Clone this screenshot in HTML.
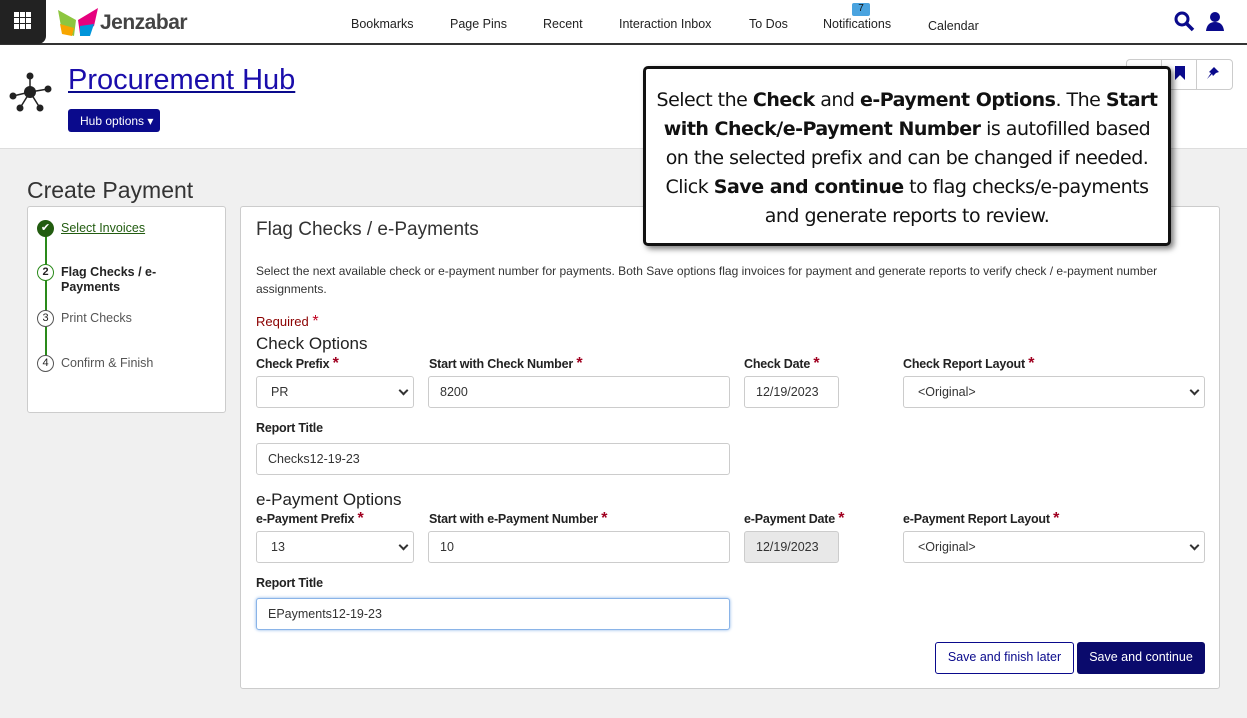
<!DOCTYPE html>
<html><head><meta charset="utf-8"><style>
*{box-sizing:border-box;margin:0;padding:0}
body{width:1247px;height:718px;overflow:hidden;background:#f0f0f0;font-family:"Liberation Sans",Arial,sans-serif;position:relative;color:#222}
.abs{position:absolute}
.top{left:0;top:0;width:1247px;height:45px;background:#fff;border-bottom:2px solid #333}
.grid{left:0;top:0;width:46px;height:44px;background:#222;border-bottom-right-radius:8px}
.nav{top:17px;font-size:12.5px;color:#222}
.hub{left:0;top:45px;width:1247px;height:104px;background:#fff;border-bottom:1px solid #ddd}
.lbl{font-size:12.5px;font-weight:bold;color:#222;letter-spacing:-0.2px}
.lbl b{color:#a00020;font-size:16px}
.inp{background:#fff;border:1px solid #ccc;border-radius:3px;height:32px;font-size:12.5px;padding:8px 11px;color:#333}
.sel:after{content:"";position:absolute;right:6px;top:10px;width:5px;height:5px;border-right:2px solid #333;border-bottom:2px solid #333;transform:rotate(45deg)}
.h3{font-size:17px;color:#222}
.step{font-size:12.5px;color:#555}
.circ{width:17px;height:17px;border:1.5px solid #555;border-radius:50%;font-size:11px;text-align:center;line-height:14px;background:#fff}
</style></head><body>
<div class="abs top"></div>
<div class="abs grid"><svg width="46" height="44"><g fill="#fff"><rect x="14" y="12" width="5" height="5"/><rect x="20" y="12" width="5" height="5"/><rect x="26" y="12" width="5" height="5"/><rect x="14" y="18" width="5" height="5"/><rect x="20" y="18" width="5" height="5"/><rect x="26" y="18" width="5" height="5"/><rect x="14" y="24" width="5" height="5"/><rect x="20" y="24" width="5" height="5"/><rect x="26" y="24" width="5" height="5"/></g></svg></div>
<svg class="abs" style="left:56px;top:6px" width="44" height="32"><path d="M2 4 L20 14 L18 30 L6 26Z" fill="#8dc63f"/><path d="M22 14 L42 2 L38 20 L24 28Z" fill="#e6007e"/><path d="M4 18 L18 22 L16 30 L6 28Z" fill="#f7a600"/><path d="M24 20 L38 18 L34 30 L24 30Z" fill="#0095da"/></svg>
<div class="abs" style="left:100px;top:11px;font-size:21px;color:#444;font-weight:bold;letter-spacing:-0.5px">Jenzabar</div>
<div class="abs nav" style="left:351px">Bookmarks</div>
<div class="abs nav" style="left:450px">Page Pins</div>
<div class="abs nav" style="left:543px">Recent</div>
<div class="abs nav" style="left:619px">Interaction Inbox</div>
<div class="abs nav" style="left:749px">To Dos</div>
<div class="abs nav" style="left:823px">Notifications</div>
<div class="abs" style="left:852px;top:3px;width:18px;height:13px;background:#4aa3df;border-radius:2px;font-size:10px;text-align:center;color:#111">7</div>
<div class="abs nav" style="left:928px;top:19px">Calendar</div>
<svg class="abs" style="left:1174px;top:11px" width="22" height="22"><circle cx="8" cy="8" r="6" fill="none" stroke="#0a0a8c" stroke-width="3"/><path d="M12 12 L19 19" stroke="#0a0a8c" stroke-width="3.5"/></svg>
<svg class="abs" style="left:1205px;top:11px" width="22" height="22"><circle cx="10" cy="6" r="5" fill="#0a0a8c"/><path d="M1 20 Q2 11 10 11 Q18 11 19 20Z" fill="#0a0a8c"/></svg>
<div class="abs hub"></div>
<svg class="abs" style="left:8px;top:72px" width="44" height="44"><g stroke="#222" stroke-width="1.5"><line x1="22" y1="20" x2="22" y2="4"/><line x1="22" y1="20" x2="5" y2="24"/><line x1="22" y1="20" x2="40" y2="17"/><line x1="22" y1="20" x2="12" y2="36"/><line x1="22" y1="20" x2="32" y2="36"/></g><g fill="#222"><circle cx="22" cy="20" r="6"/><circle cx="22" cy="4" r="3.5"/><circle cx="5" cy="24" r="3.5"/><circle cx="40" cy="17" r="3.5"/><circle cx="12" cy="36" r="3.5"/><circle cx="32" cy="36" r="3.5"/></g></svg>
<div class="abs" style="left:68px;top:64px;font-size:29px;color:#1a0dab;text-decoration:underline;text-decoration-color:#0a0a8c">Procurement Hub</div>
<div class="abs" style="left:68px;top:109px;width:92px;height:23px;background:#0a0a8c;border-radius:3px;color:#fff;font-size:12px;padding:5px 0 0 12px">Hub options ▾</div>
<div class="abs" style="left:1126px;top:59px;width:107px;height:31px;border:1px solid #ccc;border-radius:4px;background:#fff"></div>
<div class="abs" style="left:1161px;top:59px;width:36px;height:31px;border-left:1px solid #ccc;border-right:1px solid #ccc"></div>
<svg class="abs" style="left:1174px;top:66px" width="12" height="14"><path d="M1 0H11V14L6 9L1 14Z" fill="#0a0a8c"/></svg>
<svg class="abs" style="left:1206px;top:66px" width="14" height="14"><path d="M8 1L13 6L10 7L7 10L6 8L1 13L5 7L3 6Z" fill="#0a0a8c"/></svg>
<div class="abs" style="left:27px;top:177px;font-size:23px;color:#333">Create Payment</div>
<div class="abs" style="left:27px;top:206px;width:199px;height:207px;background:#fff;border:1px solid #ccc;border-radius:3px"></div>
<div class="abs" style="left:45px;top:236px;width:2px;height:120px;background:#2a8a1a"></div>
<div class="abs" style="left:37px;top:220px;width:17px;height:17px;border-radius:50%;background:#225c10;color:#fff;font-size:11px;text-align:center;line-height:17px">✔</div>
<div class="abs step" style="left:61px;top:221px;color:#225c10;text-decoration:underline">Select Invoices</div>
<div class="abs circ" style="left:37px;top:264px;border-color:#2a8a1a;font-weight:bold">2</div>
<div class="abs step" style="left:61px;top:265px;color:#222;font-weight:bold;line-height:15px">Flag Checks / e-<br>Payments</div>
<div class="abs circ" style="left:37px;top:310px">3</div>
<div class="abs step" style="left:61px;top:311px">Print Checks</div>
<div class="abs circ" style="left:37px;top:355px">4</div>
<div class="abs step" style="left:61px;top:356px">Confirm &amp; Finish</div>
<div class="abs" style="left:240px;top:206px;width:980px;height:483px;background:#fff;border:1px solid #ccc;border-radius:3px"></div>
<div class="abs" style="left:256px;top:219px;font-size:19px;color:#333">Flag Checks / e-Payments</div>
<div class="abs" style="left:256px;top:262px;width:950px;font-size:12px;line-height:18px;color:#333">Select the next available check or e-payment number for payments. Both Save options flag invoices for payment and generate reports to verify check / e-payment number assignments.</div>
<div class="abs" style="left:256px;top:313px;font-size:13px;color:#8b0000">Required <span style="color:#c00020;font-size:16px">*</span></div>
<div class="abs h3" style="left:256px;top:334px">Check Options</div>
<div class="abs lbl" style="left:256px;top:355px">Check Prefix <b>*</b></div>
<div class="abs lbl" style="left:429px;top:355px">Start with Check Number <b>*</b></div>
<div class="abs lbl" style="left:744px;top:355px">Check Date <b>*</b></div>
<div class="abs lbl" style="left:903px;top:355px">Check Report Layout <b>*</b></div>
<div class="abs inp sel" style="left:256px;top:376px;width:158px;padding-left:14px">PR</div>
<div class="abs inp" style="left:428px;top:376px;width:302px">8200</div>
<div class="abs inp" style="left:744px;top:376px;width:95px">12/19/2023</div>
<div class="abs inp sel" style="left:903px;top:376px;width:302px;padding-left:14px">&lt;Original&gt;</div>
<div class="abs lbl" style="left:256px;top:421px">Report Title</div>
<div class="abs inp" style="left:256px;top:443px;width:474px">Checks12-19-23</div>
<div class="abs h3" style="left:256px;top:490px">e-Payment Options</div>
<div class="abs lbl" style="left:256px;top:510px">e-Payment Prefix <b>*</b></div>
<div class="abs lbl" style="left:429px;top:510px">Start with e-Payment Number <b>*</b></div>
<div class="abs lbl" style="left:744px;top:510px">e-Payment Date <b>*</b></div>
<div class="abs lbl" style="left:903px;top:510px">e-Payment Report Layout <b>*</b></div>
<div class="abs inp sel" style="left:256px;top:531px;width:158px;padding-left:14px">13</div>
<div class="abs inp" style="left:428px;top:531px;width:302px">10</div>
<div class="abs inp" style="left:744px;top:531px;width:95px;background:#e8e8e8">12/19/2023</div>
<div class="abs inp sel" style="left:903px;top:531px;width:302px;padding-left:14px">&lt;Original&gt;</div>
<div class="abs lbl" style="left:256px;top:576px">Report Title</div>
<div class="abs inp" style="left:256px;top:598px;width:474px;border-color:#8ab4e8;box-shadow:0 0 3px #8ab4e8">EPayments12-19-23</div>
<div class="abs" style="left:935px;top:642px;width:139px;height:32px;border:1px solid #0a0a8c;border-radius:3px;font-size:12.5px;color:#0a0a8c;text-align:center;line-height:29px;background:#fff">Save and finish later</div>
<div class="abs" style="left:1077px;top:642px;width:128px;height:32px;background:#0a0a6c;border-radius:3px;font-size:12.5px;color:#fff;text-align:center;line-height:30px">Save and continue</div>
<div class="abs" style="left:643px;top:66px;width:528px;height:180px;background:#fff;border:3px solid #111;border-radius:5px;box-shadow:3px 3px 6px rgba(0,0,0,.5);font-family:'DejaVu Sans',sans-serif;font-size:19px;line-height:29px;text-align:center;padding-top:17px;color:#111;letter-spacing:-0.5px;white-space:nowrap">Select the <b>Check</b> and <b>e-Payment Options</b>. The <b>Start</b><br><b>with Check/e-Payment Number</b> is autofilled based<br>on the selected prefix and can be changed if needed.<br>Click <b>Save and continue</b> to flag checks/e-payments<br>and generate reports to review.</div>
</body></html>
